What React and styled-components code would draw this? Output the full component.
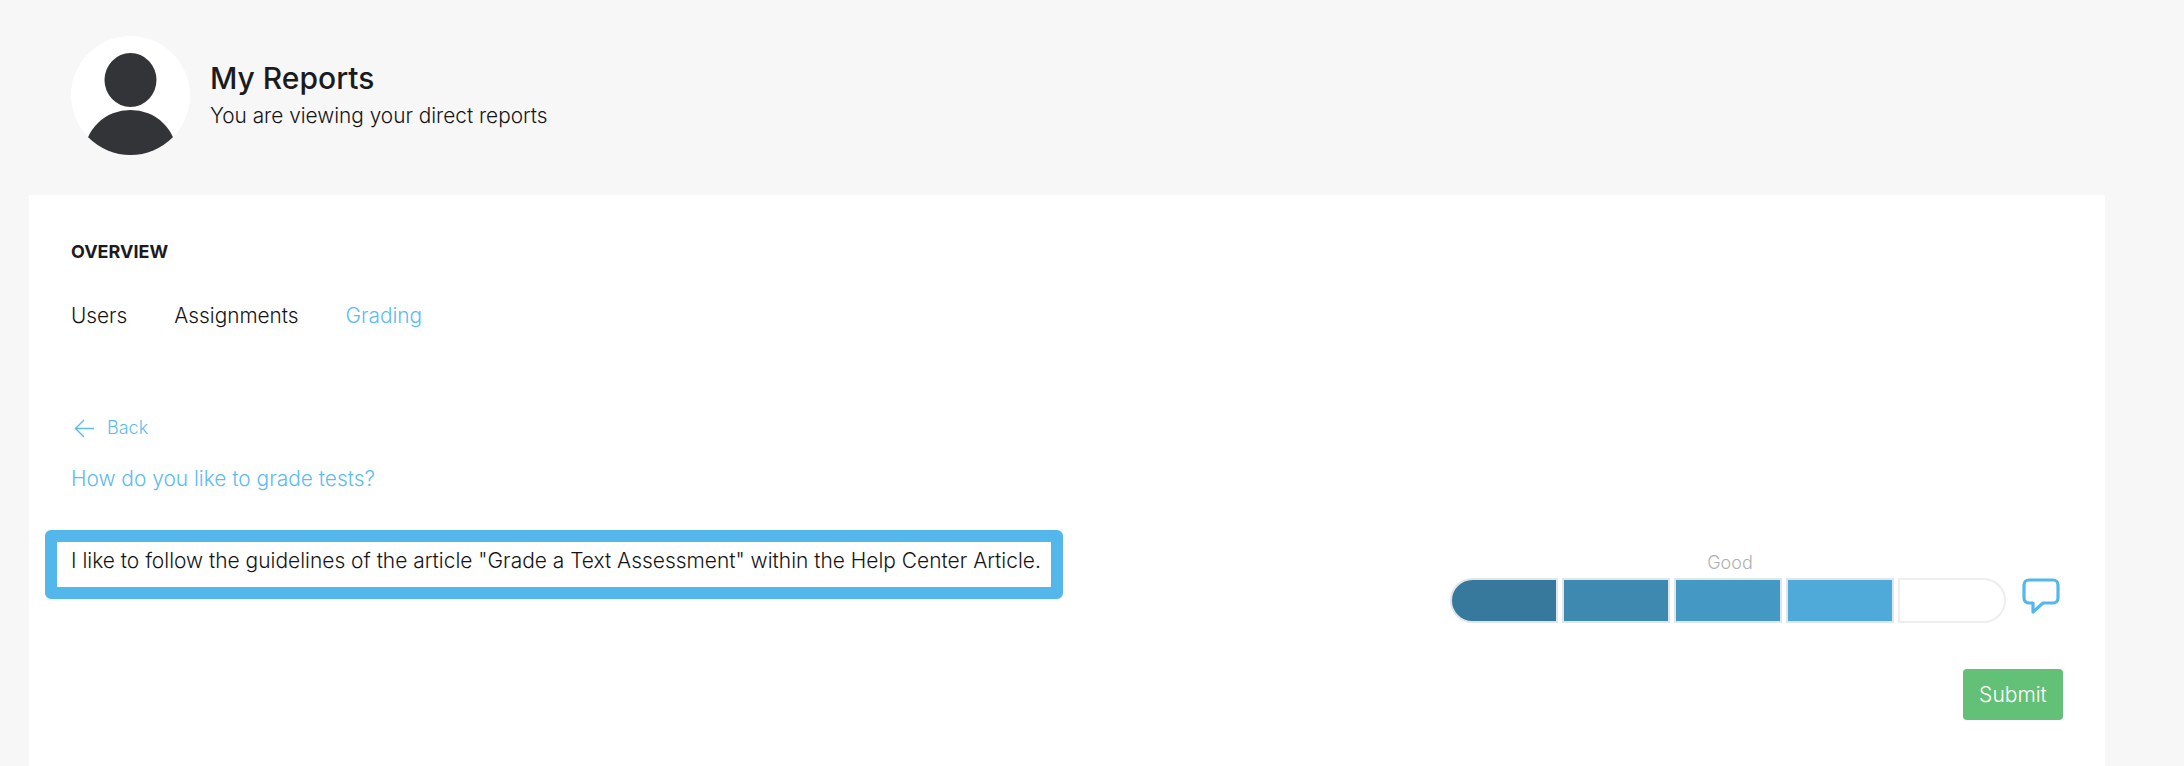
import React from 'react';
import styled, { createGlobalStyle } from 'styled-components';

const GlobalStyle = createGlobalStyle`
  html, body {
    margin: 0;
    padding: 0;
    height: 100%;
    overflow: hidden;
    background: #f7f7f7;
    font-family: "Inter", "Liberation Sans", sans-serif;
    color: #141416;
  }
`

const Page = styled.div`
  width: 2184px;
  height: 766px;
  display: flex;
  flex-direction: column;
`

const Header = styled.header`
  display: flex;
  align-items: center;
  gap: 20px;
  height: 195px;
  padding: 36px 0 40px 71px;
  box-sizing: border-box;
`

const Avatar = styled.svg`
  width: 119px;
  height: 119px;
  display: block;
`

const HeaderText = styled.div`
  display: flex;
  flex-direction: column;
  gap: 8px;
  padding-bottom: 2px;
`

const Title = styled.h1`
  margin: 0;
  font-size: 30px;
  line-height: 34px;
  font-weight: 500;
  color: #1b1b1d;
`

const Subtitle = styled.p`
  margin: 0;
  font-size: 20.8px;
  line-height: 26px;
  font-weight: 300;
`

const Panel = styled.main`
  flex: 1;
  width: 2076px;
  margin-left: 29px;
  padding: 46px 42px 0;
  box-sizing: border-box;
  background: #fff;
`

const SectionLabel = styled.h2`
  margin: 0;
  font-size: 18px;
  line-height: 22px;
  font-weight: 700;
  color: #1b1b1d;
`

const Tabs = styled.nav`
  display: flex;
  gap: 47px;
  margin-top: 40px;
`

const Tab = styled.a`
  font-size: 20.8px;
  line-height: 26px;
  font-weight: 300;
  color: ${p => (p.$active ? '#5bbcf0' : 'inherit')};
`

const BackLink = styled.a`
  display: flex;
  align-items: center;
  gap: 12px;
  margin-top: 87px;
  margin-left: 3px;
  font-size: 18px;
  line-height: 24px;
  font-weight: 300;
  color: #5bbcf0;
`

const Question = styled.p`
  margin: 26px 0 0;
  font-size: 20.9px;
  line-height: 26px;
  font-weight: 300;
  color: #5bbcf0;
`

const AnswerRow = styled.div`
  display: flex;
  justify-content: space-between;
  align-items: flex-start;
  margin-top: 38px;
`

const Answer = styled.div`
  margin-left: -26px;
  padding: 6px 0 6px 14px;
  width: 1018px;
  height: 69px;
  box-sizing: border-box;
  border: 12px solid #53b7ec;
  border-radius: 6px;
  font-size: 20.94px;
  line-height: 26px;
  font-weight: 300;
  white-space: nowrap;
`

const RatingGroup = styled.div`
  display: flex;
  align-items: flex-end;
  gap: 16px;
  margin-top: 23px;
  margin-right: 3px;
`

const Rating = styled.div`
  display: flex;
  flex-direction: column;
  align-items: center;
  gap: 5px;
`

const RatingLabel = styled.span`
  font-size: 18px;
  line-height: 20px;
  font-weight: 300;
  color: #b0b0b0;
  margin-left: 4px;
`

const Scale = styled.div`
  display: flex;
  gap: 4px;
`

const Segment = styled.div`
  width: 108px;
  height: 45px;
  box-sizing: border-box;
  border: 2px solid ${p => (p.$color ? '#dfe6ea' : '#eeeeee')};
  background: ${p => p.$color || '#fff'};
  border-radius: ${p => (p.$first ? '23px 0 0 23px' : p.$last ? '0 23px 23px 0' : '0')};
`

const CommentIcon = styled.svg`
  width: 38px;
  height: 36px;
  display: block;
  margin-bottom: 9px;
`

const Actions = styled.div`
  display: flex;
  justify-content: flex-end;
  margin-top: 46px;
`

const SubmitButton = styled.button`
  width: 100px;
  height: 51px;
  border: 0;
  border-radius: 4px;
  background: #62c176;
  color: #fff;
  font-family: inherit;
  font-size: 21px;
  font-weight: 300;
`

const segments = ['#36799d', '#3d89b0', '#4498c4', '#4fa9d9', null];

function App() {
  return (
    <Page>
      <GlobalStyle />
      <Header>
        <Avatar viewBox="0 0 119 119">
          <defs>
            <clipPath id="avatar-clip">
              <circle cx="59.5" cy="59.5" r="59.5" />
            </clipPath>
          </defs>
          <circle cx="59.5" cy="59.5" r="59.5" fill="#fff" />
          <g clipPath="url(#avatar-clip)" fill="#333438">
            <ellipse cx="59.5" cy="44" rx="26" ry="27" />
            <ellipse cx="59.5" cy="118" rx="46" ry="44" />
          </g>
        </Avatar>
        <HeaderText>
          <Title>My Reports</Title>
          <Subtitle>You are viewing your direct reports</Subtitle>
        </HeaderText>
      </Header>
      <Panel>
        <SectionLabel>OVERVIEW</SectionLabel>
        <Tabs>
          <Tab>Users</Tab>
          <Tab>Assignments</Tab>
          <Tab $active>Grading</Tab>
        </Tabs>
        <BackLink>
          <svg width="21" height="21" viewBox="0 0 21 21" fill="none" stroke="#5bbcf0" strokeWidth="1.4">
            <path d="M20 10.5H2M10 2l-8.5 8.5L10 19" />
          </svg>
          Back
        </BackLink>
        <Question>How do you like to grade tests?</Question>
        <AnswerRow>
          <Answer>I like to follow the guidelines of the article "Grade a Text Assessment" within the Help Center Article.</Answer>
          <RatingGroup>
            <Rating>
              <RatingLabel>Good</RatingLabel>
              <Scale>
                {segments.map((color, i) => (
                  <Segment key={i} $color={color} $first={i === 0} $last={i === segments.length - 1} />
                ))}
              </Scale>
            </Rating>
            <CommentIcon viewBox="0 0 38 36" fill="none" stroke="#53b7ec" strokeWidth="3.2" strokeLinejoin="round">
              <path d="M7 2h24a5 5 0 0 1 5 5v13a5 5 0 0 1-5 5H21L11 34v-9H7a5 5 0 0 1-5-5V7a5 5 0 0 1 5-5z" />
            </CommentIcon>
          </RatingGroup>
        </AnswerRow>
        <Actions>
          <SubmitButton>Submit</SubmitButton>
        </Actions>
      </Panel>
    </Page>
  );
}

export default App;
